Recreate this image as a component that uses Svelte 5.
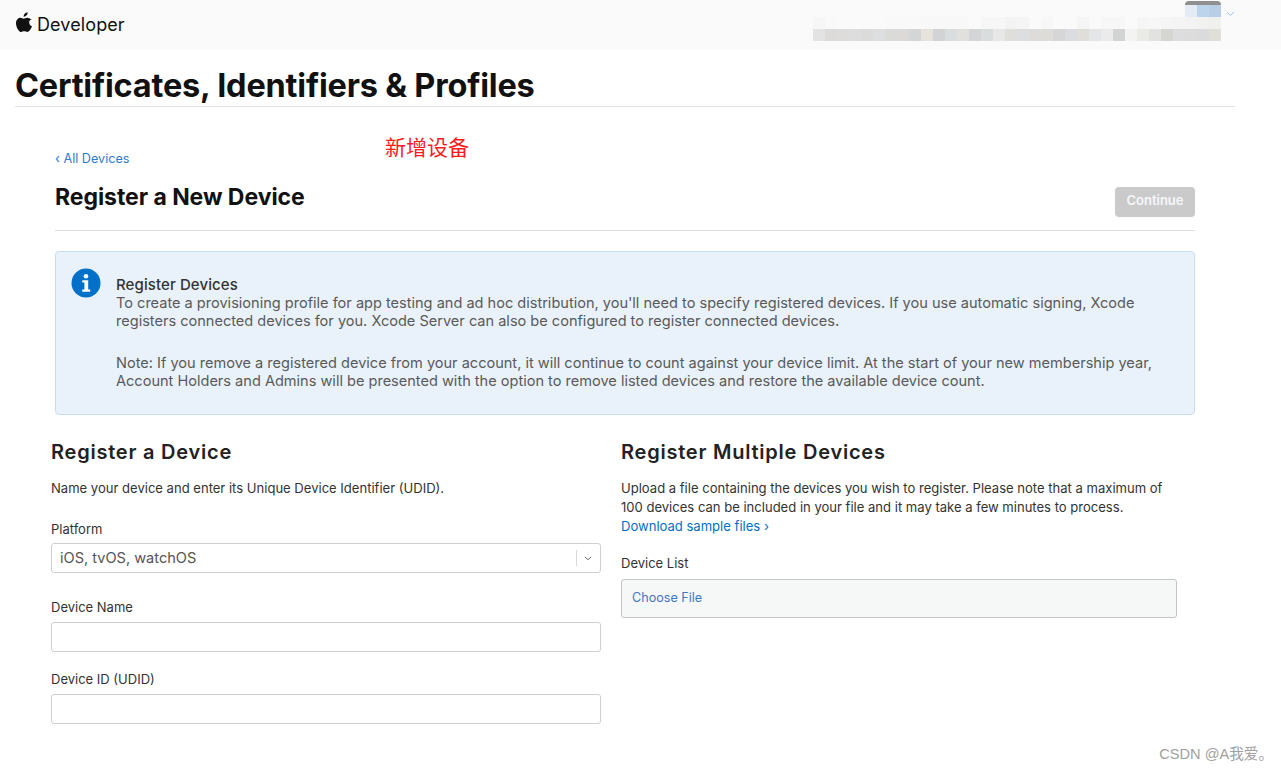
<script>
  const blurCells = ['#e3e3e3','#dcdbd9','#dddcda','#dcdddc','#dbdbda','#dcdedf','#dadad9','#dbdad8','#d3d5d6','#e6e3de','#d1d3d5','#d9dddd','#e2e0dc','#d3d5d7','#dadddd','#e7e7e7','#dfdedb','#dcdee0','#dddcdb','#dedcd8','#d5d6d5','#dbdce0','#e0ded9','#e4e5e7','#ebebeb','#d2d4d3','#f3f3f1','#eaeae7','#e2e2e1','#d5d5d2','#dddde0','#dcdcdd','#dadbdd','#e0ded9'];
  const faintCells = ['#f6f6f6','#f9f9f9','#fafafa','#fafafa','#fafafa','#fafafa','#f9f9f9','#f9f9f9','#f9f9f9','#f8f8f8','#f8f8f8','#f8f8f8','#f8f8f8','#fafafa','#f6f6f6','#f7f7f7','#f3f3f3','#f5f5f5','#fafafa','#f7f7f7','#fafafa','#fafafa','#f5f5f5','#fafafa','#f7f7f7','#f7f7f7','#fafafa','#f6f6f6','#f7f7f7','#f5f5f5','#f4f4f4','#f3f3f3','#f1f1f0','#f0f0ee'];
</script>

<div class="page">
  <header class="topbar">
    <div class="brand">
      <svg class="apple" viewBox="0 0 16 20" width="16" height="20" aria-hidden="true">
        <path d="M11.6 0.2c.1 1.2-.3 2.3-1 3.1-.7.9-1.8 1.5-2.9 1.4-.1-1.1.4-2.3 1-3C9.4.9 10.6.3 11.6.2zM15.4 6.9c-1.5 1-2.2 2-2.2 3.6 0 1.9 1 3 2.8 3.8-.5 1.4-1.1 2.6-2 3.8-.8 1.1-1.6 1.9-2.7 1.9-1.1 0-1.6-.7-3.1-.7-1.4 0-2 .7-3.1.7-1.1 0-1.9-.9-2.8-2.1C.9 16 0 13.5 0 11.200c0-3.500 2.300-5.400 4.500-5.400 1.300 0 2.300.9 3.200.9.800 0 2-.9 3.500-.9 1.600 0 3.100.8 4.200 2.100z" fill="#111"/>
      </svg>
      <span class="devname">Developer</span>
    </div>
    <div class="avatar">
      <span class="cap"></span>
      <span class="tile t1"></span><span class="tile t2"></span><span class="tile t3"></span>
    </div>
    <svg class="chev" viewBox="0 0 10 6" width="9" height="6" aria-hidden="true"><path d="M1 1l4 3.500L9 1" fill="none" stroke="#9cc4ec" stroke-width="1.100"/></svg>
    <div class="mosaic">
      <div class="blurred faint">
        {#each faintCells as c}
          <span style="background:{c}"></span>
        {/each}
      </div>
      <div class="blurred">
        {#each blurCells as c}
          <span style="background:{c}"></span>
        {/each}
      </div>
    </div>
  </header>

  <div class="titlebar">
    <h1>Certificates, Identifiers &amp; Profiles</h1>
  </div>

  <main class="content">
    <a class="back" href="#top"><span class="lt">‹</span> All Devices</a>
    <span class="note">新增设备</span>
    <div class="headrow">
      <h2>Register a New Device</h2>
      <button class="continue" disabled>Continue</button>
    </div>

    <section class="info">
      <svg class="infoicon" viewBox="0 0 30 30" width="30" height="30" aria-hidden="true">
        <circle cx="15" cy="15" r="14.500" fill="#0070c9"/>
        <circle cx="15" cy="8.300" r="2.300" fill="#fff"/>
        <path d="M11.300 12.300h5.900v9.200h2v2.300h-8v-2.300h2.200v-6.900h-2.100z" fill="#fff"/>
      </svg>
      <div class="infotext">
        <h3>Register Devices</h3>
        <p>To create a provisioning profile for app testing and ad hoc distribution, you'll need to specify registered devices. If you use automatic signing, Xcode registers connected devices for you. Xcode Server can also be configured to register connected devices.</p>
        <p class="second">Note: If you remove a registered device from your account, it will continue to count against your device limit. At the start of your new membership year, Account Holders and Admins will be presented with the option to remove listed devices and restore the available device count.</p>
      </div>
    </section>

    <div class="columns">
      <section class="col left">
        <h4>Register a Device</h4>
        <p class="desc">Name your device and enter its Unique Device Identifier (UDID).</p>
        <label class="lab first" for="platform">Platform</label>
        <div class="select" id="platform">
          <span>iOS, tvOS, watchOS</span>
          <span class="sep"></span>
          <svg viewBox="0 0 10 6" width="8" height="5" aria-hidden="true"><path d="M1 1l4 3.500L9 1" fill="none" stroke="#666" stroke-width="1.200"/></svg>
        </div>
        <label class="lab" for="dname">Device Name</label>
        <input id="dname" class="field" />
        <label class="lab" for="udid">Device ID (UDID)</label>
        <input id="udid" class="field" />
      </section>

      <section class="col right">
        <h4>Register Multiple Devices</h4>
        <p class="desc">Upload a file containing the devices you wish to register. Please note that a maximum of 100 devices can be included in your file and it may take a few minutes to process.</p>
        <a class="sample" href="#top">Download sample files <span>›</span></a>
        <div class="lab list">Device List</div>
        <div class="file"><span>Choose File</span></div>
      </section>
    </div>
  </main>

  <div class="watermark">CSDN @A我爱。</div>
</div>

<style>
  :global(body) {
    margin: 0;
    background: #fff;
    font-family: Inter, "Noto Sans CJK SC", sans-serif;
  }
  .page {
    position: relative;
    width: 1281px;
    height: 771px;
    overflow: hidden;
    color: #333;
  }
  .topbar {
    position: relative;
    height: 50px;
    background: #fafafa;
    display: flex;
    align-items: center;
    padding-left: 16px;
    box-sizing: border-box;
  }
  .brand { display: flex; align-items: center; gap: 5px; margin-top: -1px; }
  .apple { margin-top: -6px; }
  .devname { font-size: 18px; color: #111; letter-spacing: 0.100px; }
  .avatar {
    position: absolute;
    left: 1185px;
    top: 1px;
    width: 36px;
    height: 16px;
    display: flex;
    padding-top: 4px;
    box-sizing: border-box;
  }
  .cap {
    position: absolute;
    top: 0; left: 0; right: 0;
    height: 4px;
    background: #909090;
    border-radius: 12px 12px 0 0;
  }
  .tile { width: 12px; height: 12px; }
  .t1 { background: #e4ebf4; }
  .t2 { background: #bcd5ec; }
  .t3 { background: #b8cde6; }
  .chev { position: absolute; left: 1226px; top: 11px; }
  .mosaic {
    position: absolute;
    left: 813px;
    top: 17px;
  }
  .blurred {
    display: flex;
    filter: blur(0.6px);
  }
  .blurred span { width: 12px; height: 12px; }
  .titlebar {
    margin: 0 46px 0 15px;
    height: 56px;
    border-bottom: 1px solid #e0e0e0;
    box-sizing: content-box;
  }
  h1 {
    margin: 0;
    padding-top: 16px;
    font-size: 32.500px;
    line-height: 40px;
    font-weight: 700;
    color: #111;
    letter-spacing: -0.200px;
  }
  .content {
    position: relative;
    margin-left: 55px;
    width: 1140px;
    padding-top: 43px;
  }
  .back {
    display: block;
    font-size: 12.600px;
    line-height: 16px;
    color: #2f7cd0;
    text-decoration: none;
  }
  .lt { font-size: 13px; }
  .note {
    position: absolute;
    left: 330px;
    top: 25px;
    font-size: 21px;
    line-height: 28px;
    color: #ff1a1a;
    font-family: "Noto Sans CJK SC", sans-serif;
    font-weight: 400;
  }
  .headrow {
    display: flex;
    justify-content: space-between;
    align-items: flex-start;
    height: 56px;
    margin-top: 7px;
    border-bottom: 1px solid #dcdee0;
    box-sizing: content-box;
  }
  h2 {
    margin: 0;
    padding-top: 8px;
    font-size: 23px;
    line-height: 30px;
    font-weight: 700;
    color: #111;
    letter-spacing: -0.050px;
  }
  .continue {
    width: 80px;
    height: 30px;
    margin-top: 13px;
    padding: 0 0 5px;
    border: none;
    border-radius: 4px;
    background: #cacaca;
    color: #f7f7f7;
    font: 600 13px Inter, sans-serif;
  }
  .info {
    display: flex;
    margin-top: 20px;
    height: 164px;
    box-sizing: border-box;
    background: #e9f2fa;
    border: 1px solid #c6def2;
    border-radius: 4px;
    padding: 16px 15px;
  }
  .infoicon { flex: none; }
  .infotext { margin-left: 15px; padding-top: 7px; width: 1050px; }
  h3 {
    margin: 0;
    font-size: 15px;
    line-height: 19px;
    font-weight: 500;
    color: #333;
    letter-spacing: 0.100px;
  }
  .infotext p {
    margin: 0;
    font-size: 14.550px;
    line-height: 18px;
    font-weight: 400;
    color: #5a5a5a;
  }
  .infotext .second { margin-top: 24px; }
  .columns {
    display: flex;
    margin-left: -4px;
    margin-top: 25px;
    gap: 20px;
  }
  .col.left { width: 550px; flex: none; }
  .col.right { width: 556px; flex: none; }
  h4 {
    margin: 0;
    font-size: 20px;
    line-height: 24px;
    font-weight: 600;
    color: #222;
    letter-spacing: 0.770px;
  }
  .desc {
    margin: 15px 0 0;
    font-size: 13.050px;
    line-height: 19px;
    color: #333;
  }
  .lab {
    display: block;
    font-size: 13px;
    line-height: 16px;
    color: #333;
    margin-top: 19px;
    margin-bottom: 7px;
    font-weight: 400;
  }
  .lab.first { margin-top: 23px; margin-bottom: 6px; }
  .select, .field {
    display: block;
    width: 100%;
    height: 30px;
    box-sizing: border-box;
    border: 1px solid #cfcfcf;
    border-radius: 3px;
    background: #fff;
  }
  .select {
    display: flex;
    align-items: center;
    padding: 0 8px;
    font-size: 14.550px;
    color: #555;
    margin-bottom: 26px;
  }
  .select span:first-child { flex: 1; }
  .sep { width: 1px; height: 16px; background: #d8d8d8; margin-right: 7px; }
  .field { margin-bottom: 19px; padding: 0; outline: none; }
  .field + .lab { margin-top: 0; }
  .select + .lab { margin-top: 0; }
  .sample {
    display: block;
    font-size: 13.050px;
    line-height: 19px;
    color: #0070c9;
    text-decoration: none;
  }
  .lab.list { margin-bottom: 8px; }
  .file {
    height: 39px;
    box-sizing: border-box;
    border: 1px solid #c4c4c4;
    border-radius: 3px;
    background: #f6f8f8;
    display: flex;
    align-items: center;
    padding-left: 10px;
    padding-bottom: 2px;
    font-size: 12.600px;
    color: #3f76c8;
  }
  .watermark {
    position: absolute;
    right: 8px;
    bottom: 8px;
    font-family: "Liberation Sans", "Noto Sans CJK SC", sans-serif;
    font-size: 14.600px;
    line-height: 18px;
    color: #a0a0a0;
  }
</style>
